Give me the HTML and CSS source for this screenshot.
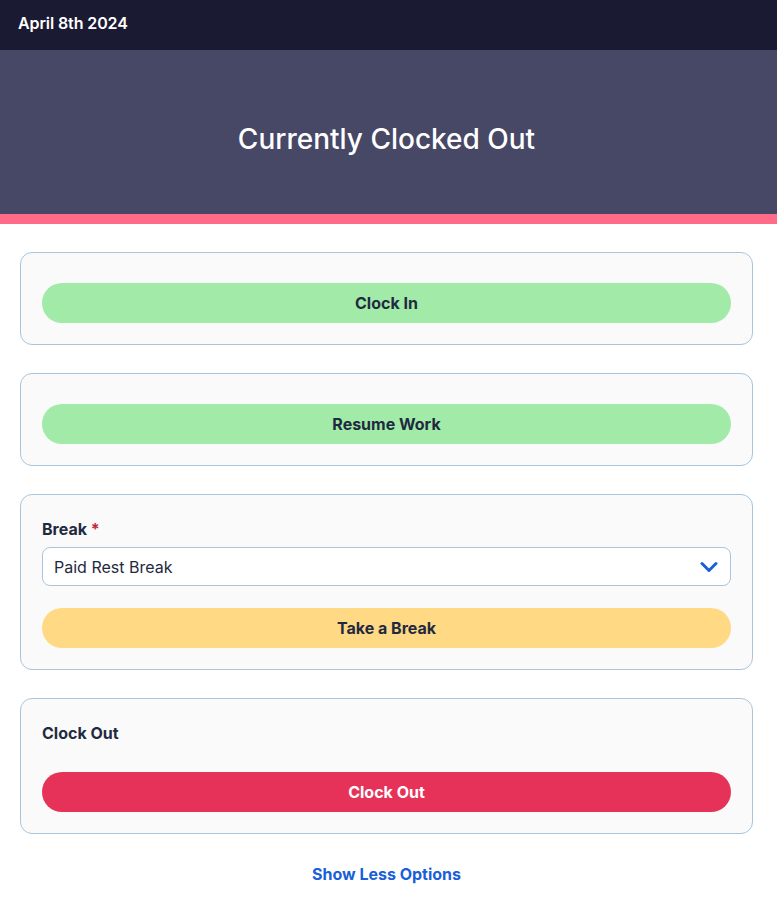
FILE: index.html
```html
<!DOCTYPE html>
<html lang="en">
<head>
<meta charset="utf-8">
<title>Time Clock</title>
<link rel="stylesheet" href="styles.css">
</head>
<body>
<header class="topbar">April 8th 2024</header>
<section class="hero"><h1 class="hero-title">Currently Clocked Out</h1></section>
<div class="accent"></div>
<main class="content">
  <div class="card card-simple">
    <button class="btn btn-green">Clock In</button>
  </div>
  <div class="card card-simple">
    <button class="btn btn-green">Resume Work</button>
  </div>
  <div class="card card-break">
    <label class="label">Break <span class="req">*</span></label>
    <div class="select">
      <span>Paid Rest Break</span>
      <svg class="chev" width="18" height="12" viewBox="0 0 18 12"><path d="M2 2.5 L9 9.5 L16 2.5" fill="none" stroke="#1a5fd9" stroke-width="3" stroke-linecap="round" stroke-linejoin="round"/></svg>
    </div>
    <button class="btn btn-yellow">Take a Break</button>
  </div>
  <div class="card card-out">
    <div class="label">Clock Out</div>
    <button class="btn btn-red">Clock Out</button>
  </div>
  <div class="more"><a class="more-link">Show Less Options</a></div>
</main>
</body>
</html>
```
FILE: styles.css
```css
* { box-sizing: border-box; }
body {
  margin: 0;
  font-family: Inter, "Noto Sans", sans-serif;
  background: #ffffff;
  color: #1f2a40;
}
.topbar {
  height: 50px;
  background: #1a1a33;
  color: #ffffff;
  font-size: 16px;
  font-weight: 600;
  letter-spacing: -0.1px;
  padding: 13px 18px 0;
}
.hero {
  height: 164px;
  background: #474766;
  display: flex;
  align-items: center;
  justify-content: center;
  padding-right: 4px;
}
.hero-title {
  margin: 0;
  color: #ffffff;
  font-size: 28px;
  font-weight: 500;
  padding-top: 14px;
}
.accent {
  height: 10px;
  background: #ff6b88;
}
.content {
  padding: 28px 24px 0 20px;
  display: flex;
  flex-direction: column;
  gap: 28px;
}
.card {
  border: 1px solid #a9c5dd;
  border-radius: 12px;
  background: #fafafa;
  padding: 20px 21px 21px;
  display: flex;
  flex-direction: column;
}
.card-simple { padding-top: 30px; }
.btn {
  height: 40px;
  border: none;
  border-radius: 20px;
  font-family: inherit;
  font-size: 16px;
  font-weight: 700;
  color: #1f2a40;
  width: 100%;
}
.btn-green { background: #a2eaa8; }
.btn-yellow { background: #ffd983; margin-top: 22px; }
.btn-red { background: #e63258; color: #ffffff; margin-top: 27px; }
.label {
  font-size: 16px;
  font-weight: 700;
  line-height: 24px;
  color: #1f2a40;
  margin-top: 2px;
}
.card-break .label { margin-bottom: 6px; margin-top: 2px; }
.card-out { padding-top: 20px; }
.req { color: #c1243f; }
.select {
  height: 39px;
  border: 1px solid #a9c5dd;
  border-radius: 8px;
  background: #ffffff;
  display: flex;
  align-items: center;
  justify-content: space-between;
  padding: 0 12px 0 11px;
  font-size: 16px;
  color: #1f2a40;
}
.chev { display: block; }
.more {
  display: flex;
  justify-content: center;
  padding-top: 0;
}
.more-link {
  color: #1a5fd9;
  font-size: 16px;
  font-weight: 700;
  line-height: 24px;
}
```
